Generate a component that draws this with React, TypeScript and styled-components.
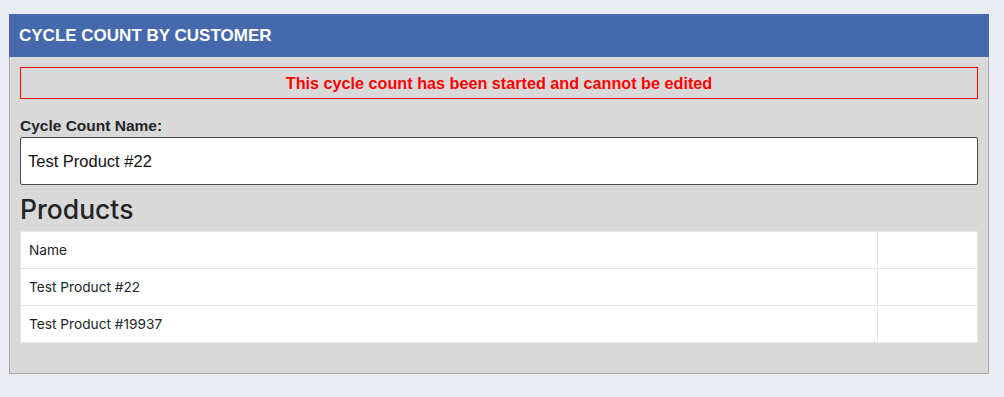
import React from "react";
import styled, { createGlobalStyle } from "styled-components";

const Global = createGlobalStyle`
  html, body { margin: 0; padding: 0; background: #e9edf2; }
  body { font-family: "Liberation Sans", Arial, sans-serif; color: #212529; }
  * { box-sizing: border-box; }
`;

const Page = styled.div`
  padding: 14px 15px 23px 9px;
`;

const Panel = styled.section`
  border: 1px solid #a9a9a9;
  border-top: none;
  background: #d9d9d9;
`;

const Header = styled.header`
  background: #4669ad;
  height: 43px;
  display: flex;
  align-items: center;
  padding: 0 10px;
  margin: 0 -1px;
  color: #fff;
  font-weight: 700;
  font-size: 17px;
`;

const Body = styled.div`
  padding: 10px 10px 30px 10px;
  display: flex;
  flex-direction: column;
`;

const Alert = styled.div`
  border: 1px solid #ff0000;
  height: 32px;
  display: flex;
  align-items: center;
  justify-content: center;
  color: #ff0000;
  font-weight: 700;
  font-size: 16.2px;
`;

const Label = styled.label`
  margin-top: 18px;
  font-weight: 700;
  font-size: 15.5px;
  line-height: 18px;
  color: #212529;
`;

const Input = styled.input`
  margin-top: 2px;
  height: 48px;
  border: 1px solid #4a4a4a;
  border-radius: 2px;
  background: #fff;
  padding: 0 7px;
  font-family: "Liberation Sans", Arial, sans-serif;
  font-size: 16.5px;
  color: #111;
  outline: none;
`;

const Title = styled.h3`
  margin: 4px 0 2px 0;
  font-family: Inter, "Liberation Sans", sans-serif;
  font-weight: 500;
  font-size: 26.5px;
  line-height: 40px;
  color: #212529;
`;

const Table = styled.table`
  width: 100%;
  border-collapse: collapse;
  background: #fff;
  font-family: Inter, "Liberation Sans", sans-serif;
  font-size: 13.7px;
  color: #212529;
`;

const Cell = styled.td<{ $narrow?: boolean }>`
  border: 1px solid #e3e6ea;
  height: 37px;
  padding: 0 8px;
  width: ${(p) => (p.$narrow ? "100px" : "auto")};
`;

const rows = ["Name", "Test Product #22", "Test Product #19937"];

export default function App() {
  return (
    <>
      <Global />
      <Page>
        <Panel>
          <Header>CYCLE COUNT BY CUSTOMER</Header>
          <Body>
            <Alert>This cycle count has been started and cannot be edited</Alert>
            <Label>Cycle Count Name:</Label>
            <Input defaultValue="Test Product #22" readOnly />
            <Title>Products</Title>
            <Table>
              <tbody>
                {rows.map((r) => (
                  <tr key={r}>
                    <Cell>{r}</Cell>
                    <Cell $narrow />
                  </tr>
                ))}
              </tbody>
            </Table>
          </Body>
        </Panel>
      </Page>
    </>
  );
}
